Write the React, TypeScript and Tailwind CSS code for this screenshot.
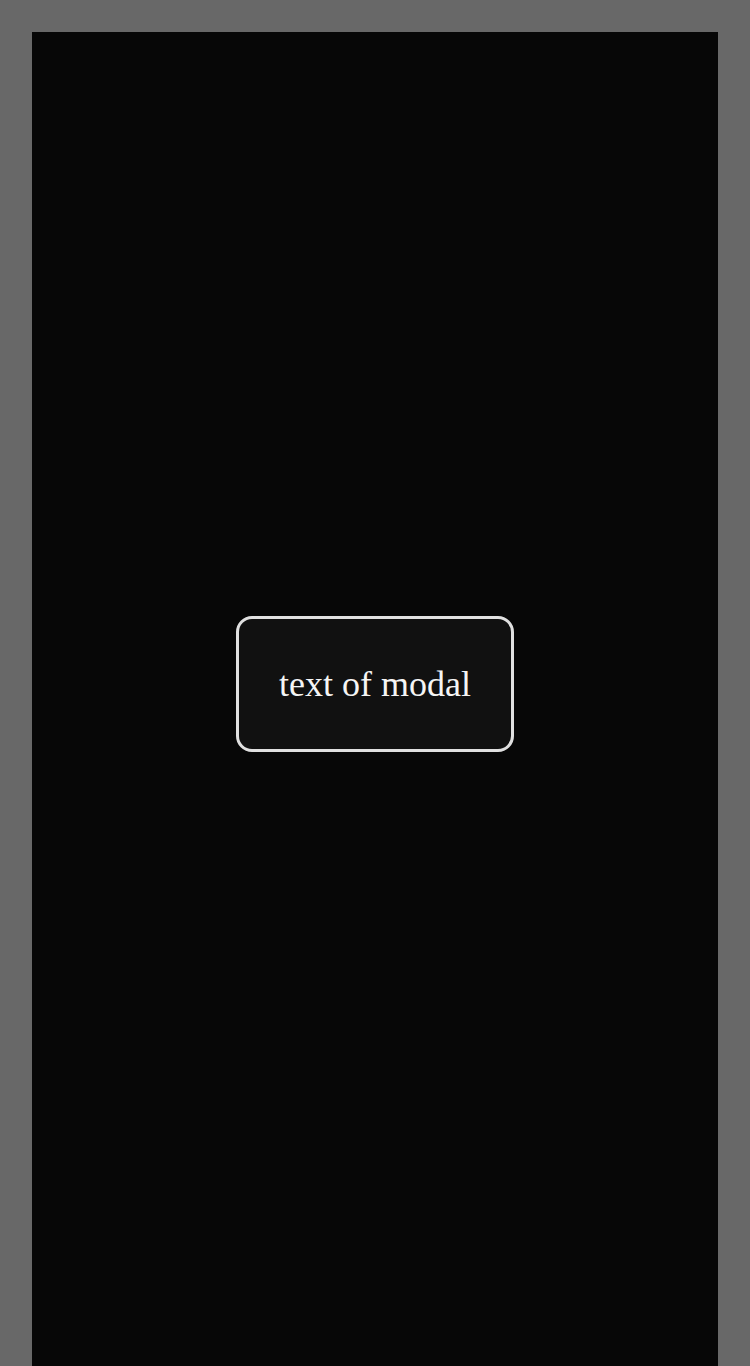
export default function App() {
  return (
    <div className="w-[750px] h-[1366px] overflow-hidden bg-[#686868] pt-8 px-8">
      <div className="h-[1334px] bg-[#070707] flex justify-center pt-[584px]">
        <div
          className="w-[278px] h-[136px] flex items-center justify-center rounded-[16px] border-[3px] border-[#e0e0e0] bg-[#111111] text-[36px] leading-none text-[#f5f5f5]"
          style={{ fontFamily: '"Liberation Serif", "Times New Roman", serif' }}
        >
          text of modal
        </div>
      </div>
    </div>
  );
}
